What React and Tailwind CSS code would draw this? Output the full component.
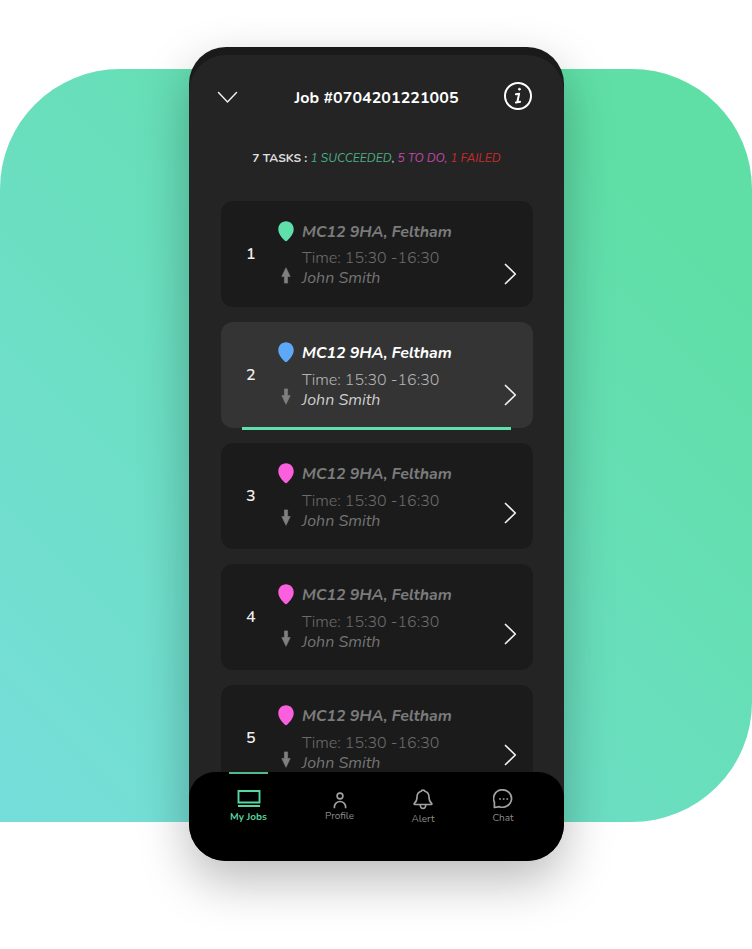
const FONT = "font-['Nunito','Lato','Open_Sans',sans-serif]";

const TASKS = [
  { id: 1, pin: "#5fdfa9", direction: "up", gap: "mt-[6px]", arrow: "pt-[62px]" },
  { id: 2, pin: "#5ea9f7", direction: "down", active: true, gap: "mt-[7px]", arrow: "pt-[62px]" },
  { id: 3, pin: "#fa5fdd", direction: "down", gap: "mt-[7px]", arrow: "pt-[59px]" },
  { id: 4, pin: "#fa5fdd", direction: "down", gap: "mt-[7px]", arrow: "pt-[59px]" },
  { id: 5, pin: "#fa5fdd", direction: "down", gap: "mt-[7px]", arrow: "pt-[59px]" },
];

function Pin({ color }) {
  return (
    <svg width="17" height="21" viewBox="0 0 17 21" className="block">
      <path
        d="M8 0.300C3.500 0.300 0.300 3.900 0.300 8.200c0 4.600 3.400 8.400 6.600 11.600.6.6 1.600.6 2.200 0 3.200-3.200 6.600-7 6.600-11.600C15.700 3.900 12.500.3 8 .3Z"
        fill={color}
      />
    </svg>
  );
}

function DirectionArrow({ direction }) {
  return (
    <svg width="11" height="17" viewBox="0 0 11 17" className="block">
      <path
        d={direction === "up" ? "M5 0.700 9.200 9.500H6.600V16.100H3.400V9.500H.8Z" : "M5 16.300.8 7.500H3.400V.9H6.600V7.500H9.200Z"}
        fill="#808080"
        stroke="#808080"
        strokeWidth="0.600"
        strokeLinejoin="round"
      />
    </svg>
  );
}

function TaskCard({ task }) {
  const titleColor = task.active ? "text-white" : "text-[#7b7b7b]";
  const timeColor = task.active ? "text-[#b4b4b4]" : "text-[#6c6c6c]";
  const nameColor = task.active ? "text-[#cecece]" : "text-[#757575]";
  return (
    <div className={`relative flex h-[106px] shrink-0 rounded-xl ${task.active ? "bg-[#343434]" : "bg-[#1b1b1b]"}`}>
      <div className="flex w-[57px] items-center pl-[25px] text-[16px] font-semibold text-[#eeeeee]">{task.id}</div>
      <div className="flex w-[17px] flex-col pt-[20px]">
        <Pin color={task.pin} />
        <div className="ml-[3px] mt-[25px]">
          <DirectionArrow direction={task.direction} />
        </div>
      </div>
      <div className="flex flex-1 flex-col whitespace-nowrap pl-[7px] pt-[21px] leading-5">
        <span className={`text-[16px] font-bold italic tracking-[-0.120px] ${titleColor}`}>MC12 9HA, Feltham</span>
        <span className={`text-[16px] font-light ${task.gap} ${timeColor}`}>Time: 15:30 -16:30</span>
        <span className={`text-[16px] italic ${nameColor}`}>John Smith</span>
      </div>
      <div className={`w-[29px] ${task.arrow}`}>
        <svg width="13" height="22" viewBox="0 0 13 22" className="block">
          <path d="M1.500 1.500 11.300 11 1.500 20.500" fill="none" stroke="#f2f2f2" strokeWidth="1.700" strokeLinecap="round" strokeLinejoin="round" />
        </svg>
      </div>
      {task.active && <div className="absolute bottom-[-2px] left-[21px] h-[3px] w-[269px] bg-[#5fdfa9]" />}
    </div>
  );
}

function JobsIcon() {
  return (
    <svg width="24" height="19" viewBox="0 0 24 19" fill="none" stroke="#57d6a0" strokeWidth="1.900" className="block">
      <path d="M1.500 2h21v11.500h-21ZM1 17h22" />
    </svg>
  );
}

function ProfileIcon() {
  return (
    <svg width="14" height="17" viewBox="0 0 14 17" fill="none" stroke="#a3a3a3" strokeWidth="1.600" className="block">
      <circle cx="7" cy="4" r="2.900" />
      <path d="M1.400 16.300v-1.200a5.600 5.600 0 0 1 11.200 0v1.200" />
    </svg>
  );
}

function BellIcon() {
  return (
    <svg width="20" height="21" viewBox="0 0 20 21" fill="none" stroke="#a3a3a3" strokeWidth="1.600" strokeLinejoin="round" strokeLinecap="round" className="block">
      <path d="M8.100 2.300C8.300.7 11.700.7 11.900 2.300 14.700 3.200 16 5.300 16 8c0 3.400.7 4.900 2.700 6.300.5.500.2 1.200-.4 1.200H1.700c-.6 0-.9-.7-.4-1.200C3.300 12.900 4 11.400 4 8c0-2.700 1.300-4.800 4.100-5.700Z" />
      <path d="M7.300 15.700c0 4.900 5.400 4.900 5.400 0" />
    </svg>
  );
}

function ChatIcon() {
  return (
    <svg width="21" height="20" viewBox="0 0 21 20" fill="none" stroke="#a3a3a3" strokeWidth="1.700" strokeLinejoin="round" className="block">
      <path d="M1.400 18.500V13.200A9 8.700 0 1 1 6.500 17.700Z" />
      <path d="M6.200 10h1.700M9.800 10h1.700M13.400 10h1.700" strokeWidth="1.700" />
    </svg>
  );
}

function BottomNav() {
  return (
    <nav className="relative -mt-[22px] flex h-[89px] shrink-0 rounded-t-[26px] bg-black text-[10px] leading-3 text-[#8c8c8c]">
      <div className="ml-[39.500px] flex w-10 flex-col items-center">
        <div className="h-[2px] w-[39px] bg-[#50ba8c]" />
        <div className="mt-[15px]"><JobsIcon /></div>
        <span className="mt-[3px] whitespace-nowrap font-bold text-[#57cf9b]">My Jobs</span>
      </div>
      <div className="ml-[51px] flex w-10 flex-col items-center pt-[20px]">
        <ProfileIcon />
        <span className="mt-[1px]">Profile</span>
      </div>
      <div className="ml-[43.500px] flex w-10 flex-col items-center pt-[17px]">
        <BellIcon />
        <span className="mt-[3px]">Alert</span>
      </div>
      <div className="ml-[40px] flex w-10 flex-col items-center pt-[17px]">
        <ChatIcon />
        <span className="mt-[3px]">Chat</span>
      </div>
    </nav>
  );
}

export default function App() {
  return (
    <main className={`grid h-[949px] w-[752px] overflow-hidden bg-white ${FONT}`}>
      <div className="col-start-1 row-start-1 mt-[69px] h-[753px] rounded-[120px] rounded-bl-none bg-[linear-gradient(225deg,#5fdfa6_15%,#76deda_98%)]" />
      <section className="z-10 col-start-1 row-start-1 ml-[189px] mt-[47px] flex h-[814px] w-[375px] flex-col overflow-hidden rounded-[37px] bg-[#1a1a1a] shadow-[0_20px_50px_rgba(0,0,0,0.27)]">
        <div className="mt-[8px] flex h-[739px] shrink-0 flex-col overflow-hidden rounded-t-[37px] bg-[#242424]">
          <header className="flex h-[85px] shrink-0 items-center justify-between pl-[28px] pr-[31px]">
            <svg width="21" height="13" viewBox="0 0 21 13">
              <path d="m1.500 1.500 9 9.500 9-9.500" fill="none" stroke="#eeeeee" strokeWidth="1.500" strokeLinecap="round" />
            </svg>
            <h1 className="pl-[12px] pt-[1px] text-[16px] font-bold tracking-[0.050px] text-white">Job #0704201221005</h1>
            <svg width="30" height="30" viewBox="0 0 30 30" fill="none" stroke="white" strokeLinecap="round" strokeLinejoin="round" className="mb-1">
              <circle cx="15" cy="15" r="13" strokeWidth="2" />
              <path d="M12.900 13.300l3.200-.6-1.800 8.500 2.800-.4M12.900 21.500l1.400-.3" strokeWidth="2" />
              <circle cx="16.400" cy="8.200" r="1" fill="white" strokeWidth="0.800" />
            </svg>
          </header>
          <p className="mt-[8px] whitespace-nowrap text-center text-[12px] leading-5 text-[#dedede]">
            <span className="font-bold">7 TASKS : </span>
            <i className="text-[#4baf84]">1 SUCCEEDED</i>, <i className="text-[#c249aa]">5 TO DO, </i>
            <i className="text-[#cc2b2b]">1 FAILED</i>
          </p>
          <div className="mt-[33px] flex flex-col gap-[15.100px] px-8 pr-[31px]">
            {TASKS.map((task) => <TaskCard key={task.id} task={task} />)}
          </div>
        </div>
        <BottomNav />
      </section>
    </main>
  );
}
